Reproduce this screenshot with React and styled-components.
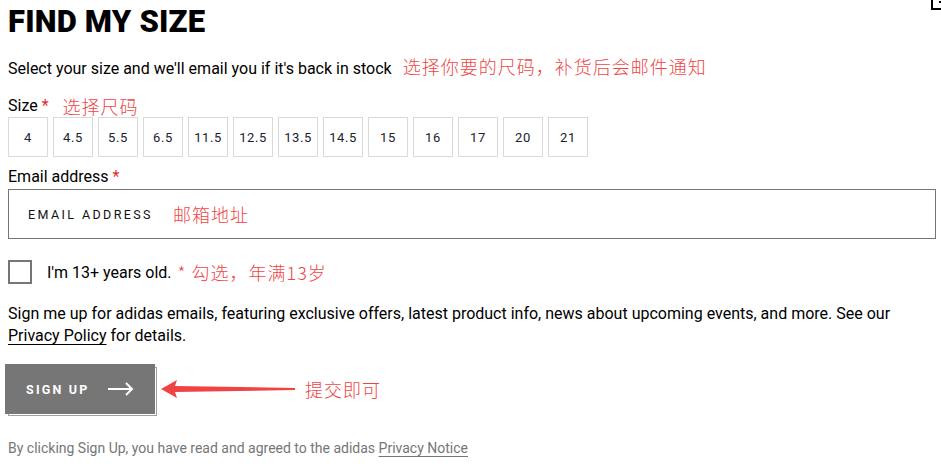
import React, { useState } from "react";
import styled, { createGlobalStyle } from "styled-components";

const GlobalStyle = createGlobalStyle`
  html, body {
    margin: 0;
    padding: 0;
    background: #fff;
  }
  body {
    font-family: "Roboto", "Noto Sans CJK SC", sans-serif;
    color: #000;
  }
`;

const Page = styled.div`
  position: relative;
  width: 941px;
  height: 464px;
  overflow: hidden;
  padding: 0 8px;
  box-sizing: border-box;
`;

const CloseCorner = styled.div`
  position: absolute;
  top: -14px;
  right: -14px;
  width: 24px;
  height: 24px;
  border: 2px solid #000;
  box-sizing: border-box;
  &::after {
    content: "";
    position: absolute;
    left: 6px;
    bottom: 5px;
    width: 2px;
    height: 2px;
    background: #000;
  }
`;

const Title = styled.h1`
  margin: 4px 0 0;
  font-family: "Roboto", sans-serif;
  font-weight: 900;
  font-size: 31px;
  line-height: 36px;
  letter-spacing: 0.2px;
`;

const Note = styled.span`
  color: #f04444;
  font-family: "Noto Sans CJK SC", sans-serif;
  font-weight: 300;
  font-size: ${(p) => p.$size || 18}px;
  margin-left: ${(p) => p.$gap || 0}px;
  letter-spacing: 1px;
`;

const Lead = styled.p`
  margin: 15px 0 0;
  font-size: 16px;
  line-height: 22px;
`;

const Label = styled.div`
  margin-top: ${(p) => p.$top}px;
  font-size: 16px;
  line-height: 22px;
  display: flex;
  align-items: center;
`;

const Star = styled.span`
  color: #e32b2b;
  margin-left: 4px;
`;

const SizeGrid = styled.div`
  display: flex;
  gap: 5px;
  margin-top: 0;
`;

const SizeBox = styled.button`
  width: 40px;
  height: 40px;
  padding: 0;
  border: 1px solid #d9d9d9;
  font-family: "Roboto", sans-serif;
  font-size: 13px;
  letter-spacing: 0.6px;
  color: ${(p) => (p.$active ? "#fff" : "#1b2230")};
  background: ${(p) => (p.$active ? "#000" : "#fff")};
  cursor: pointer;
`;

const InputBox = styled.div`
  margin-top: 1px;
  height: 50px;
  width: 928px;
  border: 1px solid #767676;
  box-sizing: border-box;
  display: flex;
  align-items: center;
  padding-left: 19px;
`;

const Placeholder = styled.span`
  font-size: 12.5px;
  letter-spacing: 2.4px;
  color: #111;
`;

const CheckRow = styled.label`
  display: flex;
  align-items: center;
  margin-top: 20px;
  font-size: 16px;
  cursor: pointer;
`;

const CheckBox = styled.span`
  width: 24px;
  height: 24px;
  border: 2px solid #767676;
  box-sizing: border-box;
  margin-right: 15px;
  background: ${(p) => (p.$on ? "#000" : "#fff")};
`;

const Body = styled.p`
  margin: 18px 0 0;
  font-size: 16px;
  line-height: 22px;
`;

const Link = styled.a`
  color: inherit;
  text-decoration: underline;
  text-underline-offset: 3px;
  text-decoration-thickness: 1px;
`;

const ActionRow = styled.div`
  display: flex;
  align-items: center;
  margin-top: 17px;
  margin-left: -3px;
`;

const ButtonWrap = styled.div`
  position: relative;
  width: 150px;
  height: 50px;
`;

const ButtonShadow = styled.div`
  position: absolute;
  left: 3px;
  top: 3px;
  width: 149px;
  height: 49px;
  border: 1px solid #a0a0a0;
  box-sizing: border-box;
`;

const SignUp = styled.button`
  position: relative;
  width: 150px;
  height: 50px;
  background: #767676;
  border: 0;
  color: #fff;
  display: flex;
  align-items: center;
  justify-content: space-between;
  padding: 0 21px 0 21px;
  font-family: "Roboto", sans-serif;
  font-weight: 700;
  font-size: 12.5px;
  letter-spacing: 2.2px;
  cursor: pointer;
`;

const Footer = styled.p`
  margin: 26px 0 0;
  font-size: 14px;
  color: #767676;
`;

const sizes = ["4", "4.5", "5.5", "6.5", "11.5", "12.5", "13.5", "14.5", "15", "16", "17", "20", "21"];

export default function App() {
  const [size, setSize] = useState(null);
  const [agree, setAgree] = useState(false);

  return (
    <>
      <GlobalStyle />
      <Page>
        <CloseCorner />
        <Title>FIND MY SIZE</Title>
        <Lead>
          Select your size and we'll email you if it's back in stock
          <Note $gap={11}>选择你要的尺码，补货后会邮件通知</Note>
        </Lead>

        <Label $top={15}>
          Size<Star>*</Star>
          <Note $gap={14}>选择尺码</Note>
        </Label>
        <SizeGrid>
          {sizes.map((s) => (
            <SizeBox key={s} $active={size === s} onClick={() => setSize(s)}>
              {s}
            </SizeBox>
          ))}
        </SizeGrid>

        <Label $top={9}>
          Email address<Star>*</Star>
        </Label>
        <InputBox>
          <Placeholder>EMAIL ADDRESS</Placeholder>
          <Note $gap={20}>邮箱地址</Note>
        </InputBox>

        <CheckRow onClick={() => setAgree(!agree)}>
          <CheckBox $on={agree} />
          I'm 13+ years old.
          <Note $gap={6}>* 勾选，年满13岁</Note>
        </CheckRow>

        <Body>
          Sign me up for adidas emails, featuring exclusive offers, latest product info, news about upcoming events, and more. See our{" "}
          <Link href="#">Privacy Policy</Link> for details.
        </Body>

        <ActionRow>
          <ButtonWrap>
            <ButtonShadow />
            <SignUp>
              SIGN UP
              <svg width="26" height="14" viewBox="0 0 26 14" fill="none" stroke="#fff" strokeWidth="2">
                <path d="M0 7h24M18 1l6 6-6 6" />
              </svg>
            </SignUp>
          </ButtonWrap>
          <svg width="140" height="24" viewBox="0 0 140 24" style={{ marginLeft: 6 }}>
            <polygon points="0,12 16,3 14,9 134,11 134,13 14,15 16,21" fill="#f04444" />
          </svg>
          <Note $gap={4}>提交即可</Note>
        </ActionRow>

        <Footer>
          By clicking Sign Up, you have read and agreed to the adidas <Link href="#">Privacy Notice</Link>
        </Footer>
      </Page>
    </>
  );
}
